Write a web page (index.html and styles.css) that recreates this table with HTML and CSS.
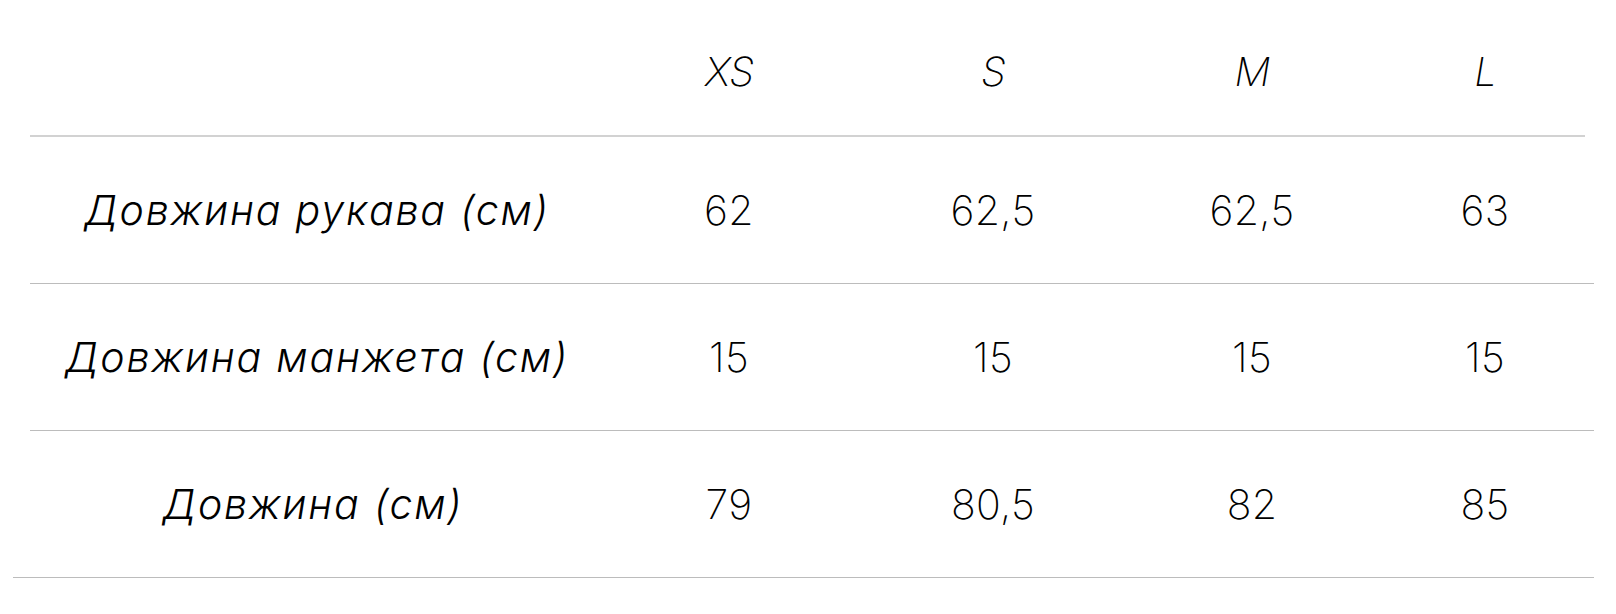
FILE: index.html
```html
<!DOCTYPE html>
<html lang="uk">
<head>
<meta charset="utf-8">
<title>Розміри</title>
<link rel="stylesheet" href="styles.css">
</head>
<body>
<div class="size-table">
  <div class="row head">
    <div class="cell label"></div>
    <div class="cell size">XS</div>
    <div class="cell size">S</div>
    <div class="cell size">M</div>
    <div class="cell size">L</div>
  </div>
  <div class="row">
    <div class="cell label">Довжина рукава (см)</div>
    <div class="cell num">62</div>
    <div class="cell num">62,5</div>
    <div class="cell num">62,5</div>
    <div class="cell num">63</div>
  </div>
  <div class="row">
    <div class="cell label">Довжина манжета (см)</div>
    <div class="cell num">15</div>
    <div class="cell num">15</div>
    <div class="cell num">15</div>
    <div class="cell num">15</div>
  </div>
  <div class="row last">
    <div class="cell label">Довжина (см)</div>
    <div class="cell num">79</div>
    <div class="cell num">80,5</div>
    <div class="cell num">82</div>
    <div class="cell num">85</div>
  </div>
</div>
</body>
</html>
```

FILE: styles.css
```css
html, body {
  margin: 0;
  padding: 0;
  background: #ffffff;
}

body {
  font-family: "Inter", "Liberation Sans", sans-serif;
  color: #000000;
}

.size-table {
  display: flex;
  flex-direction: column;
}

.row {
  display: grid;
  grid-template-columns: 583px 232px 296px 222px 244px;
  align-items: center;
  margin-left: 30px;
  width: 1564px;
  height: 146px;
  border-bottom: 1px solid #bcbcbc;
}

.row.head {
  width: 1555px;
  height: 137px;
  box-sizing: border-box;
  padding-top: 8px;
  border-bottom: 2px solid #d2d2d2;
}

.row.last {
  margin-left: 13px;
  width: 1581px;
  grid-template-columns: 600px 232px 296px 222px 244px;
}

.cell {
  text-align: center;
  line-height: 1;
  white-space: nowrap;
}

.label {
  font-style: italic;
  font-weight: 350;
  font-size: 41px;
  letter-spacing: 1.8px;
  padding-right: 9px;
}

.row.last .label {
  padding-right: 0;
}

.size {
  font-style: italic;
  font-weight: 250;
  font-size: 40px;
  letter-spacing: -1px;
}

.num {
  font-weight: 170;
  font-size: 41px;
  letter-spacing: 0.3px;
}
```
